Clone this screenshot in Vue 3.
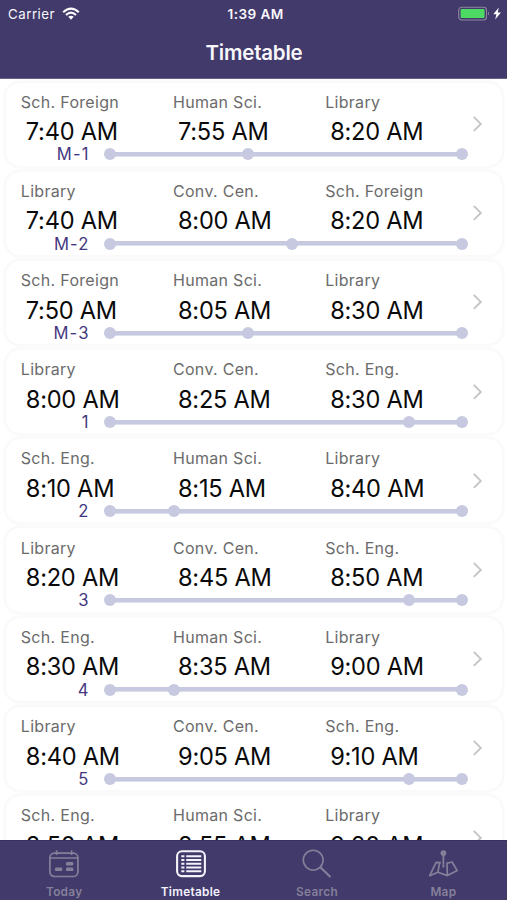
<script setup>
const FOREIGN = 'Sch. Foreign'
const HUMAN = 'Human Sci.'
const LIB = 'Library'
const CONV = 'Conv. Cen.'
const ENG = 'Sch. Eng.'

const trip = (route, places, times, mid) => ({
  route,
  mid,
  stops: places.map((place, i) => ({ place, time: times[i] })),
})

const trips = [
  trip('M-1', [FOREIGN, HUMAN, LIB], ['7:40', '7:55', '8:20'], 39.5),
  trip('M-2', [LIB, CONV, FOREIGN], ['7:40', '8:00', '8:20'], 51.6),
  trip('M-3', [FOREIGN, HUMAN, LIB], ['7:50', '8:05', '8:30'], 39.5),
  trip('1', [LIB, CONV, ENG], ['8:00', '8:25', '8:30'], 83.9),
  trip('2', [ENG, HUMAN, LIB], ['8:10', '8:15', '8:40'], 19.3),
  trip('3', [LIB, CONV, ENG], ['8:20', '8:45', '8:50'], 83.9),
  trip('4', [ENG, HUMAN, LIB], ['8:30', '8:35', '9:00'], 19.3),
  trip('5', [LIB, CONV, ENG], ['8:40', '9:05', '9:10'], 83.9),
  trip('6', [ENG, HUMAN, LIB], ['8:50', '8:55', '9:20'], 19.3),
]
</script>

<template>
  <div class="screen">
    <header class="top">
      <div class="status">
        <div class="carrier">
          <span>Carrier</span>
          <svg width="18" height="14" viewBox="0 0 18 14" fill="none" stroke="#fff" stroke-width="2.1">
            <path d="M1.2 5.2Q9-1.8 16.8 5.2M4 8Q9 3.4 14 8" />
            <path d="M6.3 9.8Q9 7.6 11.7 9.8L9 12.7Z" fill="#fff" stroke="none" />
          </svg>
        </div>
        <div class="clock">1:39 AM</div>
        <div class="power">
          <svg width="46" height="16" viewBox="0 0 46 16">
            <rect x=".7" y="1.2" width="27.8" height="12.8" rx="3" fill="none" stroke="#8d879f" stroke-width="1.1" />
            <rect x="2.6" y="3" width="24" height="9" rx="1" fill="#4cd964" />
            <path d="M30 5.5Q32.2 7.5 30 9.5Z" fill="#8d879f" />
            <path d="M40.8 1.6L35.3 8.2H38.4L37.2 13.6L42.9 6.5H39.7Z" fill="#fff" />
          </svg>
        </div>
      </div>
      <h1>Timetable</h1>
    </header>

    <main class="list">
      <article v-for="t in trips" :key="t.route" class="card">
        <div class="body">
          <div class="stops">
            <div v-for="s in t.stops" :key="s.place">
              <div class="place">{{ s.place }}</div>
              <div class="time">{{ s.time }} AM</div>
            </div>
          </div>
          <div class="route">
            <span class="name">{{ t.route }}</span>
            <div class="track">
              <i class="dot"></i>
              <i class="dot mid" :style="{ left: t.mid + '%' }"></i>
              <i class="dot"></i>
            </div>
          </div>
        </div>
        <svg class="chevron" width="12" height="18" viewBox="0 0 12 18" fill="none" stroke="#c5c5c9" stroke-width="1.9">
          <path d="M.8 1.9L7.8 8.9L.8 15.9" />
        </svg>
      </article>
    </main>

    <nav class="tabs">
      <div class="tab">
        <svg width="32" height="30" viewBox="0 0 32 30" fill="none" stroke="currentColor" stroke-width="1.7">
          <rect x="1.9" y="4.2" width="28" height="23.3" rx="4.5" />
          <path d="M2 9H30M8.6 1.3V6M23.6 1.3V6" stroke-width="1.5" />
          <g fill="currentColor" stroke="none">
            <rect x="18" y="13" width="7.3" height="3.5" rx="1.2" />
            <rect x="7" y="18.6" width="7.3" height="3.5" rx="1.2" />
            <rect x="18" y="18.6" width="7.3" height="3.5" rx="1.2" />
          </g>
        </svg>
        <span>Today</span>
      </div>
      <div class="tab active">
        <svg width="32" height="30" viewBox="0 0 32 30" fill="none" stroke="currentColor">
          <rect x="2.1" y="2.3" width="27.8" height="24.8" rx="4.8" stroke-width="2.1" />
          <path d="M6.3 7.3H9.4M6.3 11H9.4M6.3 14.8H9.4M6.3 18.6H9.4M6.3 22.3H9.4M11.2 7.3H26.3M11.2 11H26.3M11.2 14.8H26.3M11.2 18.6H26.3M11.2 22.3H26.3" stroke-width="2" />
        </svg>
        <span>Timetable</span>
      </div>
      <div class="tab">
        <svg width="32" height="30" viewBox="0 0 32 30" fill="none" stroke="currentColor">
          <circle cx="12.2" cy="11.1" r="9.9" stroke-width="1.6" />
          <path d="M19.1 17.9L29.5 28.1" stroke-width="2.1" />
        </svg>
        <span>Search</span>
      </div>
      <div class="tab">
        <svg width="32" height="30" viewBox="0 0 32 30" fill="none" stroke="currentColor" stroke-width="1.7" stroke-linejoin="round">
          <circle cx="16.4" cy="4.1" r="2.9" fill="currentColor" stroke="none" />
          <path d="M16.4 6V18.5" stroke-width="1.8" />
          <path d="M13.9 13.7L9.1 13.4L2.7 26.7L10.8 23.3L20.4 26.6L30.2 21.6L25.1 13L19.1 14.5M12.6 14L10.8 23.3M20 14.5L20.4 26.6" />
        </svg>
        <span>Map</span>
      </div>
    </nav>
  </div>
</template>

<style>
body {
  margin: 0;
  overflow: hidden;
}
</style>

<style scoped>
.screen {
  height: 900px;
  display: flex;
  flex-direction: column;
  overflow: hidden;
  background: #fff;
  font-family: Inter, 'Liberation Sans', sans-serif;
}
.top {
  flex: 0 0 79px;
  box-sizing: border-box;
  background: #423a6b;
  border-bottom: 1px solid #655f88;
  color: #f8f7fc;
}
.status {
  display: grid;
  grid-template-columns: 1fr auto 1fr;
  align-items: center;
  height: 28px;
  padding: 0 3px 0 8px;
  font-size: 13.3px;
}
.carrier {
  display: flex;
  align-items: center;
  gap: 6.5px;
  letter-spacing: 0.5px;
}
.clock {
  font-size: 13.6px;
  font-weight: 600;
  letter-spacing: 0.4px;
  transform: translateX(-0.4px);
}
.power {
  display: flex;
  justify-content: flex-end;
}
h1 {
  margin: 0;
  padding-left: 1px;
  text-align: center;
  font-size: 20.5px;
  font-weight: 600;
  line-height: 50px;
  letter-spacing: -0.2px;
}
.list {
  flex: 1;
  min-height: 0;
  overflow: hidden;
  padding: 2.5px 4.5px 0 5px;
}
.card {
  display: flex;
  align-items: center;
  box-sizing: border-box;
  height: 85.2px;
  margin-bottom: 4px;
  padding: 0 16.5px 0 14px;
  border: 1px solid #fafafa;
  border-radius: 15px;
  background: #fff;
  box-shadow: 0 0 3px 1px #f7f7f7;
}
.body {
  flex: 1;
  min-width: 0;
  align-self: stretch;
  padding-top: 9.2px;
}
.stops {
  display: grid;
  grid-template-columns: repeat(3, 152.2px);
}
.place {
  padding-left: 0.8px;
  font-size: 16px;
  line-height: 20px;
  letter-spacing: 0.3px;
  color: #6b6b6b;
}
.time {
  margin-top: 6.5px;
  padding-left: 5.8px;
  font-size: 23.6px;
  line-height: 28px;
  letter-spacing: -0.24px;
  color: #0a0a0a;
}
.route {
  display: flex;
  align-items: center;
  gap: 14.5px;
  margin-top: 2.3px;
  height: 12px;
}
.name {
  flex: none;
  width: 69.5px;
  text-align: right;
  font-size: 16.6px;
  line-height: 12px;
  letter-spacing: 1.1px;
  color: #443780;
}
.track {
  flex: none;
  position: relative;
  display: flex;
  justify-content: space-between;
  align-items: center;
  width: 364px;
  height: 12px;
  background: linear-gradient(#c6c9df, #c6c9df) center / calc(100% - 12px) 4.6px no-repeat;
}
.dot {
  width: 12px;
  height: 12px;
  border-radius: 50%;
  background: #c6c9df;
}
.mid {
  position: absolute;
  top: 0;
  transform: translateX(-50%);
}
.chevron {
  flex: none;
}
.tabs {
  flex: 0 0 60px;
  box-sizing: border-box;
  display: grid;
  grid-template-columns: repeat(4, 126.4px);
  padding: 8px 0 0 1px;
  background: #423a6b;
  border-top: 1px solid #39325e;
}
.tab {
  display: flex;
  flex-direction: column;
  align-items: center;
  color: #85809a;
  font-size: 11.8px;
  font-weight: 600;
  line-height: 14px;
  letter-spacing: 0.3px;
}
.tab svg {
  margin-bottom: 6px;
}
.active {
  color: #f4f2fb;
}
</style>
